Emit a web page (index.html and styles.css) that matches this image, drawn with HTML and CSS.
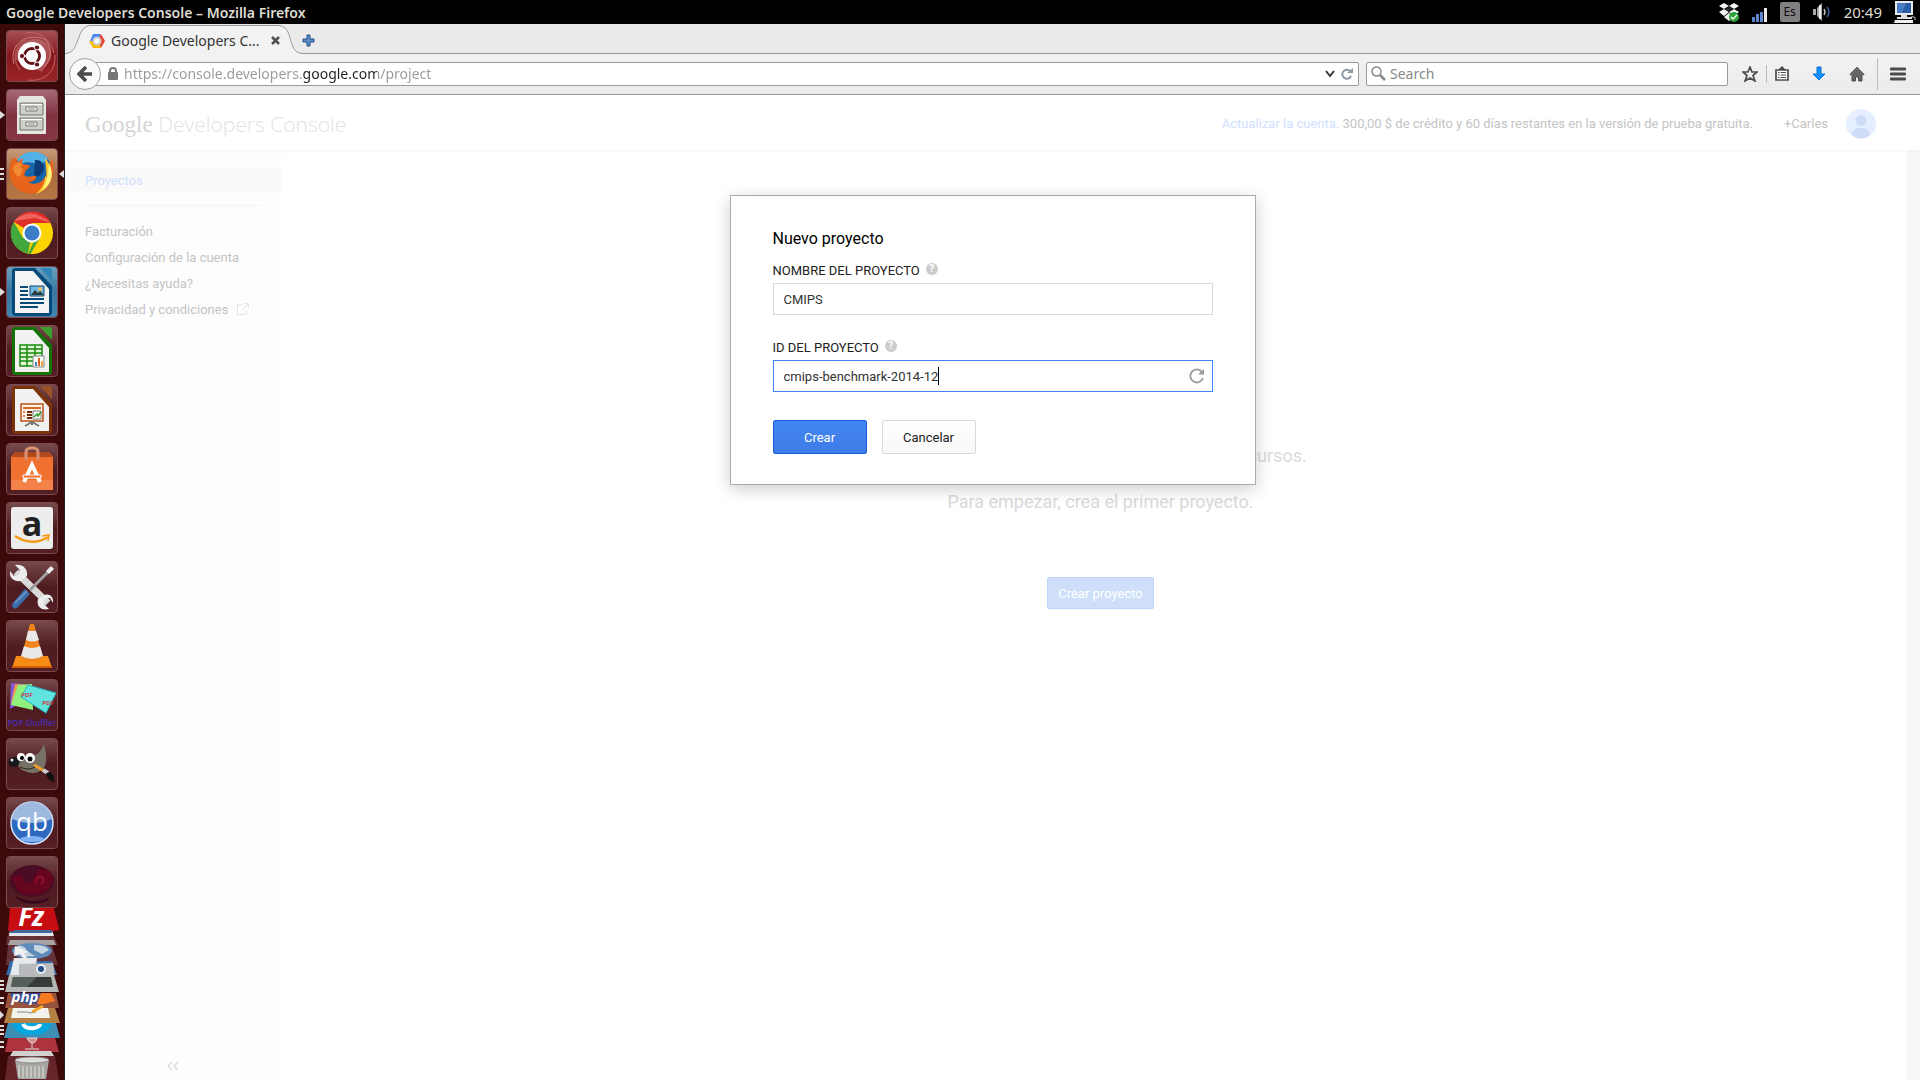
FILE: index.html
```html
<!DOCTYPE html>
<html lang="es">
<head>
  <meta charset="UTF-8">
  <meta name="viewport" content="width=device-width, initial-scale=1.0">
  <title>Google Developers Console</title>
  <link rel="stylesheet" href="styles.css">
</head>
<body>
  <header class="panel">
    <span class="panel-title">Google Developers Console – Mozilla Firefox</span>
    <div class="tray">
      <svg class="tray-dropbox" width="22" height="20" viewBox="0 0 22 20">
        <path d="M6 1l5 3-5 3-5-3zM16 1l5 3-5 3-5-3zM6 7l5 3-5 4-5-4zM16 7l5 3-5 4-5-4zM6 15l5-4 5 4-5 4z" fill="#f4f4f4"/>
        <path d="M11 4l5 3-5 3-5-3z" fill="#222"/>
        <circle cx="16" cy="15" r="5" fill="#2da336"/>
        <path d="M13 15l2 2 4-4" fill="none" stroke="#fff" stroke-width="1.5"/>
      </svg>
      <svg class="tray-signal" width="16" height="20" viewBox="0 0 16 20">
        <path d="M0 15h3v5H0zM4 12h3v8H4zM8 10h3v10H8z" fill="#5b86cf"/>
        <path d="M12 6h3v14h-3z" fill="#e8e8e8"/>
      </svg>
      <span class="keyboard">Es</span>
      <svg class="tray-sound" width="20" height="20" viewBox="0 0 20 20">
        <path d="M1 7h3v6H1zM5 6l5-5v18l-5-5z" fill="#aaa"/>
        <path d="M8 3v14" stroke="#eee" stroke-width="2"/>
        <path d="M12 7q2 3 0 6" fill="none" stroke="#bbb" stroke-width="1.5"/>
        <path d="M15 5q4 5 0 10" fill="none" stroke="#3b5f99" stroke-width="1.5"/>
      </svg>
      <time class="clock">20:49</time>
      <svg width="22" height="22" viewBox="0 0 22 22">
        <path d="M1 0h18v14H1z" fill="#e9e9e4"/>
        <path d="M3 2h14v10H3z" fill="#2a5ca8"/>
        <path d="M3 2h9L8 12H3z" fill="#4a7cc6"/>
        <path d="M7 14h6v2h5v2H3v-2h4z" fill="#ddd"/>
        <path d="M1 19h18v3H0z" fill="#eee"/>
        <path d="M17 16q5-1 4 3" fill="none" stroke="#ddd"/>
      </svg>
    </div>
  </header>

  <div class="desktop">
    <nav class="launcher" aria-label="Launcher">
      <button class="tile ubuntu" aria-label="Dash">
        <svg viewBox="0 0 52 52">
          <path d="M8 34C2 12 24 2 40 10c6 8 6 20-2 27" fill="none" stroke="#cf8080" stroke-width="1"/>
          <path d="M14 40C6 30 8 16 20 10M22 50c14 2 28-6 27-25M20 3c12-2 24 4 28 20" fill="none" stroke="#bf6868" stroke-width="1"/>
          <path d="M10 30C8 16 22 6 36 10q10 4 9 18L36 42z" fill="#d28a8a" opacity=".45"/>
          <circle cx="26" cy="26" r="14" fill="#fff"/>
          <circle cx="26" cy="26" r="7.500" fill="none" stroke="#5e1218" stroke-width="3"/>
          <path d="M26 26L14 26M26 26l6-11M26 26l6 11" stroke="#fff" stroke-width="1.500"/>
          <circle cx="26" cy="26" r="6" fill="#fff"/>
          <g fill="#5e1218" stroke="#fff"><circle cx="16" cy="26" r="2.600"/><circle cx="31" cy="17.500" r="2.600"/><circle cx="31" cy="34.500" r="2.600"/></g>
        </svg>
      </button>
      <button class="tile files arrow-left" aria-label="Files">
        <svg viewBox="0 0 52 52">
          <path d="M14 7h23l3 4v34H11V11z" fill="#e6e6e1"/>
          <path d="M14 14h23v12H14zM14 29h23v12H14z" fill="#cfcfca" stroke="#6e6e68"/>
          <path d="M15 15h21v1H15zM15 30h21v1H15z" fill="#fff"/>
          <path d="M20 18h11v4H20zM20 33h11v4H20z" fill="#f2f2ee" stroke="#777"/>
          <path d="M22 20h7M22 35h7" stroke="#888"/>
        </svg>
      </button>
      <button class="tile firefox bars-left active" aria-label="Firefox">
        <svg viewBox="0 0 52 52">
          <circle cx="27" cy="23" r="19" fill="#1766a8"/>
          <path d="M12 11a19 19 0 0 1 30 0q-8 8-14 4c-8-2-12 0-16 2z" fill="#52b2e6"/>
          <path d="M29 12c7-1 11 6 8 12-3 5-9 5-9 5z" fill="#0b3b78"/>
          <path d="M8 9l4 5 5-4-1 6 7 1c2 1 0 3-3 5l-2 5c5 4 8 0 12 1 1 4-4 6-8 6 8 5 18-1 19-11l5-12c3 12 1 25-9 31-16 10-36-2-33-22 0-4 1-8 4-11z" fill="#e8641b"/>
          <path d="M39 10c11 12 8 31-9 36 8-8 9-12 9-18l2 2z" fill="#fcc62c"/>
          <path d="M43 15c6 12 2 22-7 27 5-8 6-17 7-27z" fill="#fff27a"/>
          <path d="M7 20c1-5 5-6 10-4l-3 3 3 2-3 8c-4-1-6-4-7-9z" fill="#f38a31"/>
        </svg>
      </button>
      <button class="tile" aria-label="Chrome">
        <svg viewBox="0 0 52 52">
          <circle cx="26" cy="26" r="21" fill="#fed400"/>
          <path d="M26 26L8 15a21 21 0 0 1 37 1H26z" fill="#df2e27"/>
          <path d="M26 26l-4 20.600A21 21 0 0 1 7.800 15L17 31z" fill="#43a73d"/>
          <path d="M35 29L24.500 47A12 12 0 0 1 22 47L28 34z" fill="#43a73d"/>
          <path d="M8 14q16-16 37 2l-16-5z" fill="#f0625b"/>
          <circle cx="26" cy="26" r="9.500" fill="#fff"/><circle cx="26" cy="26" r="7.500" fill="#3b7dc8"/>
        </svg>
      </button>
      <button class="tile writer arrow-left" aria-label="LibreOffice Writer">
        <svg viewBox="0 0 52 52">
          <path d="M8 2h21l17 18v26q0 4-4 4H10q-4 0-4-4V4z" fill="#054a78"/>
          <path d="M9 5h18l16 18v24H9z" fill="#f4f4f4"/>
          <path d="M34 2h10q2 0 2 2v11z" fill="#2f85b5"/>
          <path d="M14 20h8v2h-8zM14 24h8v2h-8zM14 28h8v2h-8zM14 32h24v2H14zM14 36h24v2H14zM14 40h18v2H14z" fill="#084b78"/>
          <path d="M24 20h14v10H24z" fill="#72b7df" stroke="#084b78"/>
          <path d="M25 29l4-5 3 3 2-2 4 4z" fill="#2e3a35"/><circle cx="34" cy="23" r="2" fill="#f5b95b"/>
        </svg>
      </button>
      <button class="tile" aria-label="LibreOffice Calc">
        <svg viewBox="0 0 52 52">
          <path d="M8 2h21l17 18v26q0 4-4 4H10q-4 0-4-4V4z" fill="#147306"/>
          <path d="M9 5h18l16 18v24H9z" fill="#f1f1f1"/>
          <path d="M34 2h10q2 0 2 2v11z" fill="#3c9e2c"/>
          <path d="M14 20h22v21H14z" fill="#dff7d5" stroke="#198a0c" stroke-width="1.500"/>
          <path d="M14 24h22M14 28h22M14 32h22M14 36h22M21 20v21M29 20v21" stroke="#198a0c" stroke-width="1.500"/>
          <path d="M27 31h11v11H27z" fill="#fff" stroke="#888"/>
          <path d="M29 37h2v4h-2z" fill="#3a84c4"/><path d="M32 33h2v8h-2z" fill="#e2611c"/><path d="M35 36h2v5h-2z" fill="#f2a23a"/>
        </svg>
      </button>
      <button class="tile" aria-label="LibreOffice Impress">
        <svg viewBox="0 0 52 52">
          <path d="M8 2h21l17 18v26q0 4-4 4H10q-4 0-4-4V4z" fill="#7b3408"/>
          <path d="M9 5h18l16 18v24H9z" fill="#f1f1f1"/>
          <path d="M34 2h10q2 0 2 2v11z" fill="#9b5228"/>
          <path d="M15 20h22v17H15z" fill="#fff4eb" stroke="#b5521b" stroke-width="1.500"/>
          <path d="M17 23h18v2H17z" fill="#d9651f"/>
          <path d="M17 27h2v2h-2zM17 31h2v2h-2z" fill="#e58c50"/><path d="M21 27h5v2h-5zM21 30h5v2h-5zM21 33h5v2h-5z" fill="#6b2b08"/>
          <path d="M27 27h8v8h-8z" fill="#fff" stroke="#777"/><path d="M28 33l3-3 1 2 3-4" fill="none" stroke="#2e9a2b" stroke-width="1.500"/>
          <path d="M19 42l7-4 7 4M26 37v4" fill="none" stroke="#777" stroke-width="2"/>
        </svg>
      </button>
      <button class="tile" aria-label="Ubuntu Software Center">
        <svg viewBox="0 0 52 52">
          <path d="M5 14l4-5h34l4 5v33H5z" fill="#f0712f"/>
          <path d="M5 14l4-5h34l4 5z" fill="#b04a1c"/><path d="M5 37h42v10H5z" fill="#f58349"/>
          <path d="M20 17v-8q0-4 6-4t6 4v8" fill="none" stroke="#d99073" stroke-width="3"/>
          <path d="M18 39l8-17 8 17" fill="none" stroke="#fff" stroke-width="4"/>
          <path d="M17 32h18v3H17z" fill="#f0712f" stroke="#fff"/>
        </svg>
      </button>
      <button class="tile" aria-label="Amazon">
        <svg viewBox="0 0 52 52">
          <rect x="5" y="5" width="42" height="42" rx="3" fill="#ededed"/>
          <text x="26" y="34" class="glyph amazon-a">a</text>
          <path d="M9 34q17 11 33 1" fill="none" stroke="#f59a14" stroke-width="2.500"/><path d="M36 34l7-1-1 6" fill="none" stroke="#f59a14" stroke-width="1.500"/>
        </svg>
      </button>
      <button class="tile" aria-label="System Settings">
        <svg viewBox="0 0 52 52">
          <path d="M10 11l32 31" stroke="#d9d9d9" stroke-width="7"/>
          <path d="M9 4l5 5-1 5-5 1-4-5c-1 7 4 11 11 10l6-5c1-7-4-12-12-11zM43 48l-5-5 1-5 5-1 3 5c1-7-4-10-9-8l-6 4c-2 7 3 12 11 10z" fill="#ececec"/>
          <path d="M46 7L24 29" stroke="#9d9d9d" stroke-width="3"/><path d="M45 5l3 3-5 5-3-3z" fill="#eee"/>
          <path d="M6 43l13-15 5 5-13 14q-5 2-5-4z" fill="#3c6cab"/><path d="M9 42l12-12" stroke="#759bcb" stroke-width="1.500"/>
        </svg>
      </button>
      <button class="tile" aria-label="VLC">
        <svg viewBox="0 0 52 52">
          <path d="M10 36h32l4 12H6z" fill="#f68b16"/><path d="M6 46h40v2H6z" fill="#d35d05"/>
          <path d="M24 4h4l9 34q-11 6-22 0z" fill="#f1841c"/>
          <path d="M22 11h8l3 9q-7 3-13 0zM18 26q8 4 16 0l3 10q-11 6-22 0z" fill="#e8e8e8"/>
        </svg>
      </button>
      <button class="tile" aria-label="PDF-Shuffler">
        <svg viewBox="0 0 52 52">
          <path d="M5 4l14 1-6 20-9 5z" fill="#8257d8"/><path d="M9 5l14 1-9 22-9-4z" fill="#ef9f4e"/>
          <path d="M12 6l14-1 1 26-22-5z" fill="#8ff07e"/><path d="M22 6l28 8-10 20-25-16z" fill="#61e4de" stroke="#20b9c5"/>
          <text x="21" y="18" class="glyph pdf-mark">PDF</text><text x="42" y="26" class="glyph pdf-mark">PDF</text>
          <text x="26" y="47" class="glyph pdf-name">PDF-Shuffler</text>
        </svg>
      </button>
      <button class="tile" aria-label="GIMP">
        <svg viewBox="0 0 52 52">
          <path d="M12 21q8 0 12-2 10-2 14-13 5 18-1 25-8 7-19 2-5-2-7-8z" fill="#777267"/>
          <ellipse cx="8" cy="24" rx="5.500" ry="5" fill="#16191c"/><circle cx="6" cy="22" r="1.500" fill="#eee"/>
          <circle cx="15" cy="19" r="4" fill="#fff"/><circle cx="24" cy="20" r="5" fill="#fff"/><circle cx="16" cy="20" r="2"/><circle cx="24" cy="21" r="2.500"/>
          <path d="M28 27l12 7" stroke="#ef9c2c" stroke-width="3"/><path d="M37 32l5 3" stroke="#ccc" stroke-width="4"/><path d="M40 35q9-3 8 9-7-1-8-9z" fill="#111"/>
          <path d="M14 29q8 4 15 0" fill="none" stroke="#292621"/>
        </svg>
      </button>
      <button class="tile" aria-label="qBittorrent">
        <svg viewBox="0 0 52 52">
          <circle cx="26" cy="26" r="21" fill="#2e69c0" stroke="#d6e4f7" stroke-width="1.500"/>
          <path d="M6 22q2-15 20-17 18 2 20 17-20 8-40 0z" fill="#9db9de"/><ellipse cx="26" cy="42" rx="12" ry="3" fill="#80b2f3"/>
          <text x="26" y="34" class="glyph qb">qb</text>
        </svg>
      </button>
      <button class="tile" aria-label="Debian tools">
        <svg viewBox="0 0 52 52">
          <ellipse cx="26" cy="25" rx="22" ry="16" fill="#4a0b24"/>
          <path d="M6 20q6 19 13 18h14q13-4 14-17-4-11-15-7l-7 13q-9 0-9-8z" fill="#66061e"/>
          <path d="M30 27q0-7 6-6 4 4-1 7" fill="none" stroke="#8d1028" stroke-width="2"/>
          <path d="M10 41q16 9 33 1-2 5-14 5-12 1-19-6z" fill="#490a25" stroke="#300619"/>
        </svg>
      </button>
      <!-- launcher items folded together at the bottom edge -->
      <svg class="folded" viewBox="0 0 64 180" role="img" aria-label="More applications">
        <path d="M8 33h44l6 12H6zM8 45h44l6 20H6z" fill="#74434a" opacity=".7"/>
        <path d="M10 30h42l2 6H9z" fill="#e5e8e9"/><path d="M10 30h42v3H10z" fill="#3e6a9f"/>
        <path d="M10 40h44l2 5H8z" fill="#a9a2a3"/>
        <path d="M10 5l2 1 2-1 2 1 2-1h35l6 24-2 2-2-1-2 2-2-2H14l-2 2-2-2-2 1z" fill="#c70d12"/>
        <text x="31" y="26" class="glyph fz">Fz</text>
        <ellipse cx="32" cy="51" rx="20" ry="8" fill="#5f8ab9"/><path d="M17 46q8-1 10 5l8 5-14 1zM34 45q12 0 15 5l-7 4-8-4z" fill="#c5d6df"/>
        <path d="M15 46l14 6-5 1 3 5-3 1-3-5-7 2z" fill="#f1f1f1"/>
        <path d="M10 61h42l5 14H6z" fill="#356ba8"/><path d="M14 58h23l-2 17H10z" fill="#e7eaec"/>
        <path d="M19 64l34-1 2 12H19z" fill="#b8babd"/><circle cx="41" cy="69" r="4" fill="#28518b" stroke="#e5edf5" stroke-width="2"/>
        <path d="M9 75h45l5 17H5z" fill="#b6b8b5"/><path d="M13 77h38l2 10H11z" fill="#343b39"/><path d="M13 77h24l-10 10H11z" fill="#56605b"/>
        <path d="M8 93h48l3 15H5z" fill="#96533d"/><path d="M10 93h42q-1 11-21 11-18-1-21-11z" fill="#344d93"/><path d="M41 93h10l4 8-11 3h-7z" fill="#f57a22"/><text x="25" y="102" class="glyph php">php</text>
        <path d="M8 108h47l5 15H4z" fill="#b38045"/><path d="M13 108h35l2 10H11z" fill="#f3f3ed"/><path d="M17 112h10l3 1 6-1" fill="none" stroke="#888"/><path d="M32 112l11-6" stroke="#efa62a" stroke-width="3"/>
        <path d="M8 123h48l4 15H4z" fill="#3c8eb4"/><path d="M12 123h40q-3 12-20 12-18 0-20-12z" fill="#08a6df"/><path d="M23 124q2 5 11 4 6-1 6-4" fill="none" stroke="#fff" stroke-width="4"/>
        <path d="M8 138h47l4 14H5z" fill="#ad343f"/><path d="M27 138h10q-1 5-5 5-3 0-5-5zM32 143v5M25 149h14" fill="#d88b8b" stroke="#ddd"/>
        <path d="M13 151h38l3 5H10z" fill="#d3d1d0"/><path d="M8 156h47l4 24H5z" fill="#65252b"/>
        <path d="M15 160h34l-3 19H18z" fill="#a5a5a2"/><ellipse cx="32" cy="160" rx="17" ry="3" fill="#ddd" stroke="#8c8c88"/>
        <path d="M19 165v12M23 166v12M27 166v12M31 166v12M35 166v12M39 166v12M43 166v12" stroke="#e4e4df"/>
        <path d="M0 80h4v2H0zM0 84h4v2H0zM0 88h4v2H0zM0 97h4v2H0zM0 102h4v2H0zM0 111l4 4-4 4zM0 125h4v2H0zM0 129h4v2H0zM0 133h4v2H0zM0 141h4v2H0zM0 146h4v2H0z" fill="#ddd"/>
      </svg>
    </nav>

    <div class="browser">
      <div class="tabstrip">
        <div class="tab">
          <svg class="tab-shape" width="242" height="30" viewBox="0 0 242 30">
            <path d="M0 29.500C16 29.500 10 1.500 26 1.500H213C230 1.500 221 29.500 238 29.500V30H0z" fill="#f2f2f2"/>
            <path d="M0 29.500C16 29.500 10 1.500 26 1.500H213C230 1.500 221 29.500 238 29.500" fill="none" stroke="#999"/>
          </svg>
          <svg class="favicon" width="16" height="16" viewBox="0 0 16 16">
            <path d="M4 1h8L8 8 1 8z" fill="#4285f4"/><path d="M12 1l4 7-4 7-4-7z" fill="#e94335"/><path d="M0 8h8l4 7H4z" fill="#fbbc05"/>
            <circle cx="8" cy="8" r="4.500" fill="#ccc"/><circle cx="8" cy="8" r="2.500" fill="#fff"/>
          </svg>
          <span class="tab-title">Google Developers C...</span>
          <button class="plain" aria-label="Cerrar pestaña"><svg width="9" height="9" viewBox="0 0 9 9"><path d="M1 1l7 7M8 1L1 8" stroke="#4a4f52" stroke-width="2.500"/></svg></button>
        </div>
        <button class="plain new-tab" aria-label="Nueva pestaña"><svg width="13" height="13" viewBox="0 0 13 13"><path d="M5 1h3v4h4v3H8v4H5V8H1V5h4z" fill="#5d8dc9" stroke="#244d84"/></svg></button>
      </div>

      <div class="toolbar">
        <button class="back" aria-label="Atrás">
          <svg width="16" height="16" viewBox="0 0 16 16"><path d="M9 1L2 8l7 7M3 8h12" fill="none" stroke="#4c4c4c" stroke-width="3.500"/></svg>
        </button>
        <div class="urlbar">
          <svg width="10" height="13" viewBox="0 0 10 13"><path d="M2 6V4q0-3 3-3t3 3v2" fill="none" stroke="#777" stroke-width="2"/><rect y="5" width="10" height="8" rx="1" fill="#777"/></svg>
          <input class="url" type="text" aria-label="Dirección" value="https://console.developers.google.com/project">
          <svg width="10" height="8" viewBox="0 0 10 8"><path d="M1 1l4 5 4-5" fill="none" stroke="#333" stroke-width="2"/></svg>
          <button class="plain" aria-label="Recargar"><svg width="12" height="12" viewBox="0 0 12 12"><path d="M10 8a4.500 4.500 0 1 1-1-5" fill="none" stroke="#8d98a5" stroke-width="2"/><path d="M6 5h6V0z" fill="#8d98a5"/></svg></button>
        </div>
        <div class="searchbar">
          <svg width="15" height="15" viewBox="0 0 15 15"><circle cx="5.500" cy="5.500" r="4.500" fill="none" stroke="#888" stroke-width="1.500"/><path d="M9 9l5 5" stroke="#888" stroke-width="2.500"/></svg>
          <input type="text" aria-label="Search" placeholder="Search">
        </div>
        <div class="tools">
          <button class="plain" aria-label="Marcador"><svg width="16" height="16" viewBox="0 0 16 16"><path d="M8 1l2 5h5l-4 3.500 2 5.500-5-3-5 3 2-5.500L1 6h5z" fill="none" stroke="#4c4c4c" stroke-width="1.700"/></svg></button>
          <i class="divider"></i>
          <button class="plain" aria-label="Lista de marcadores"><svg width="14" height="16" viewBox="0 0 14 16"><path d="M1 4h12v10H1z" fill="#fff" stroke="#4c4c4c" stroke-width="1.700"/><path d="M3 4l4-4 4 4z" fill="#4c4c4c"/><path d="M3 6.500h1.500M3 9h1.500M3 11.500h1.500M5.500 6.500H11M5.500 9H11M5.500 11.500H11" stroke="#4c4c4c"/></svg></button>
          <button class="plain" aria-label="Descargas"><svg width="14" height="16" viewBox="0 0 14 16"><path d="M5 1h4v7h4l-6 6-6-6h4z" fill="#158fff" stroke="#0b76d6"/></svg></button>
          <button class="plain" aria-label="Inicio"><svg width="16" height="16" viewBox="0 0 16 16"><path d="M1 9l7-7 7 7" fill="none" stroke="#4c4c4c" stroke-width="1.700"/><path d="M3 9l5-5 5 5v6H9.500v-4h-3v4H3z" fill="#666" stroke="#4c4c4c"/></svg></button>
          <i class="divider tall"></i>
          <button class="plain" aria-label="Menú"><svg width="16" height="14" viewBox="0 0 16 14"><path d="M1 2h14M1 7h14M1 12h14" stroke="#4c4c4c" stroke-width="2.800" stroke-linecap="round"/></svg></button>
        </div>
      </div>

      <div class="page">
        <div class="page-header">
          <div class="logo"><b>Google</b> <span>Developers Console</span></div>
          <p class="trial"><a href="#">Actualizar la cuenta.</a> 300,00 $ de crédito y 60 días restantes en la versión de prueba gratuita.</p>
          <a class="user" href="#">+Carles</a>
          <svg class="avatar" width="30" height="30" viewBox="0 0 30 30"><circle cx="15" cy="15" r="15" fill="#e6efff"/><circle cx="15" cy="11.500" r="5.500" fill="#cfdcf7"/><path d="M6 26q-1-7 9-7t9 7q-9 7-18 0z" fill="#cfdcf7"/></svg>
        </div>

        <div class="page-body">
          <nav class="sidebar">
            <a class="current" href="#">Proyectos</a>
            <hr>
            <a href="#">Facturación</a>
            <a href="#">Configuración de la cuenta</a>
            <a href="#">¿Necesitas ayuda?</a>
            <a href="#">Privacidad y condiciones
              <svg width="12" height="12" viewBox="0 0 12 12"><path d="M5 1.500H.5v10h9V7M7 .5h4.500V5M11 1L5 7" fill="none" stroke="#e4e4e4"/></svg>
            </a>
            <button class="plain collapse" aria-label="Contraer"><svg width="12" height="10" viewBox="0 0 12 10"><path d="M5 1L1 5l4 4M11 1L7 5l4 4" fill="none" stroke="#ddd" stroke-width="1.500"/></svg></button>
          </nav>
          <main class="empty">
            <p>Los proyectos te permiten administrar tus recursos.</p>
            <p>Para empezar, crea el primer proyecto.</p>
            <button class="create">Crear proyecto</button>
          </main>
          <div class="scrollbar"></div>
        </div>

        <div class="overlay">
          <form class="dialog" role="dialog" aria-labelledby="dialogTitle">
            <h2 id="dialogTitle">Nuevo proyecto</h2>
            <div class="form-group">
              <div class="label-row">
                <label for="projectName">NOMBRE DEL PROYECTO</label>
                <span class="help">?</span>
              </div>
              <input type="text" id="projectName" value="CMIPS">
            </div>
            <div class="form-group">
              <div class="label-row">
                <label for="projectId">ID DEL PROYECTO</label>
                <span class="help">?</span>
              </div>
              <div class="id-field">
                <input class="focused" type="text" id="projectId" value="cmips-benchmark-2014-12">
                <span class="caret"></span>
                <button type="button" class="plain refresh" aria-label="Generar otro ID"><svg width="16" height="16" viewBox="0 0 16 16"><path d="M14 10a6.500 6.500 0 1 1-1-6" fill="none" stroke="#999" stroke-width="1.800"/><path d="M9 6.500h6V1z" fill="#999"/></svg></button>
              </div>
            </div>
            <div class="actions">
              <button type="button" class="primary">Crear</button>
              <button type="button">Cancelar</button>
            </div>
          </form>
        </div>
      </div>
    </div>
  </div>
</body>
</html>
```

FILE: styles.css
```css
* {
  box-sizing: border-box;
}

body {
  display: flex;
  flex-direction: column;
  height: 100vh;
  margin: 0;
  overflow: hidden;
  font-family: Roboto, sans-serif;
  font-size: 13px;
  color: #333;
}

svg {
  display: block;
  flex: none;
}

a {
  color: inherit;
  text-decoration: none;
}

input,
button {
  font: inherit;
  color: inherit;
}

.plain {
  padding: 0;
  border: 0;
  background: none;
}

/* top panel */
.panel {
  display: flex;
  align-items: center;
  justify-content: space-between;
  flex: none;
  height: 24px;
  padding: 0 4px 0 6px;
  background: #000;
  color: #dfdbd2;
  font-family: "Noto Sans", sans-serif;
  font-size: 14px;
}

.panel-title {
  font-weight: 600;
}

.tray {
  display: flex;
  align-items: center;
  gap: 12px;
}

.keyboard {
  width: 20px;
  height: 20px;
  border-radius: 2px;
  background: #808080;
  color: #111;
  font-size: 12px;
  line-height: 20px;
  text-align: center;
}

.clock {
  font-size: 15px;
}

/* launcher */
.desktop {
  display: flex;
  flex: 1;
  min-height: 0;
}

.launcher {
  display: flex;
  flex-direction: column;
  gap: 7px;
  flex: none;
  width: 65px;
  padding: 6px 0 0 6px;
  overflow: hidden;
  border-right: 1px solid #222;
  background: #3d0a0c;
}

.tile {
  position: relative;
  flex: none;
  width: 52px;
  height: 52px;
  padding: 0;
  border: 1px solid #7c4a4e;
  border-radius: 4px;
  background: linear-gradient(#76494b, #4d1b20 50%, #541f25);
}

.tile svg {
  width: 52px;
  height: 52px;
  margin: -1px;
  overflow: visible;
}

.ubuntu {
  background: linear-gradient(#a65054, #86171c 50%, #9a2528);
}

.files {
  background: linear-gradient(#a66a77, #7f3240 50%, #8a3744);
}

.firefox {
  background: linear-gradient(#c79b7a, #a96a40 50%, #b77744);
}

.writer {
  background: linear-gradient(#6aa0c0, #3577a0 50%, #4286af);
}

.arrow-left::before,
.active::after {
  content: "";
  position: absolute;
  top: 21px;
  border: 4px solid transparent;
}

.arrow-left::before {
  left: -7px;
  border-left: 5px solid #ddd;
}

.active::after {
  right: -7px;
  border-right: 5px solid #ddd;
}

.bars-left::before {
  content: "";
  position: absolute;
  top: 19px;
  left: -7px;
  width: 4px;
  height: 12px;
  background: repeating-linear-gradient(#ddd 0 2px, transparent 2px 5px);
}

.folded {
  width: 64px;
  height: 180px;
  margin: -15px 0 0 -6px;
}

.glyph {
  font-family: "Open Sans", sans-serif;
  font-weight: 700;
  text-anchor: middle;
}

.amazon-a {
  font-size: 34px;
  fill: #222;
}

.pdf-mark {
  font-size: 6px;
  fill: #d23a4a;
}

.pdf-name {
  font-size: 8px;
  font-weight: 600;
  fill: #4a2cb0;
}

.qb {
  font-size: 26px;
  font-weight: 400;
  fill: #fff;
}

.fz {
  font-size: 26px;
  font-style: italic;
  fill: #fff;
}

.php {
  font-size: 15px;
  font-style: italic;
  fill: #fff;
}

/* browser chrome */
.browser {
  display: flex;
  flex-direction: column;
  flex: 1;
  min-width: 0;
  font-family: "Noto Sans", sans-serif;
  font-size: 14px;
}

.tabstrip {
  display: flex;
  flex: none;
  height: 30px;
  border-bottom: 1px solid #999;
  background: #ebebeb;
}

.tab {
  position: relative;
  display: flex;
  align-items: center;
  gap: 6px;
  width: 237px;
  padding: 4px 22px 0 24px;
}

.tab-shape {
  position: absolute;
  top: 0;
  left: 0;
}

.favicon,
.tab-title,
.tab button {
  position: relative;
}

.tab-title {
  flex: 1;
  white-space: nowrap;
}

.new-tab {
  padding-top: 3px;
}

.toolbar {
  display: flex;
  align-items: center;
  flex: none;
  height: 41px;
  padding: 0 14px 1px 4px;
  border-bottom: 1px solid #999;
  background: linear-gradient(#f2f2f2, #ebebeb);
}

.back {
  z-index: 1;
  display: flex;
  align-items: center;
  justify-content: center;
  flex: none;
  width: 32px;
  height: 32px;
  padding: 0;
  border: 1px solid #9aa3ae;
  border-radius: 50%;
  background: #fafafa;
}

.urlbar,
.searchbar {
  display: flex;
  align-items: center;
  height: 24px;
  border: 1px solid #999;
  border-radius: 2px;
  background: #fff;
}

.urlbar {
  flex: 1;
  gap: 6px;
  margin-left: -6px;
  padding: 0 5px 0 12px;
}

.urlbar input,
.searchbar input {
  flex: 1;
  min-width: 0;
  padding: 0;
  border: 0;
  outline: 0;
  background: none;
}

/* only the domain is dark, the rest of the address is greyed */
.urlbar .url {
  background: linear-gradient(to right, #999 178px, #222 178px, #222 253px, #999 253px);
  background-clip: text;
  -webkit-background-clip: text;
  color: transparent;
}

.searchbar {
  gap: 4px;
  width: 362px;
  margin-left: 7px;
  padding: 0 4px;
}

.searchbar input::placeholder {
  color: #888;
}

.tools {
  display: flex;
  align-items: center;
  gap: 8px;
  margin-left: 14px;
}

.tools .plain + .plain {
  margin-left: 15px;
}

.divider {
  width: 1px;
  height: 18px;
  background: #bbb;
}

.tall {
  height: 32px;
  margin: 0 4px;
}

/* console page */
.page {
  position: relative;
  display: flex;
  flex-direction: column;
  flex: 1;
  min-height: 0;
  font-family: Roboto, sans-serif;
  font-size: 13px;
  background: #fff;
  color: #c4c4c4;
}

.page-header {
  z-index: 1;
  display: flex;
  align-items: center;
  flex: none;
  height: 55px;
  padding: 2px 44px 0 20px;
  box-shadow: 0 1px 4px rgba(0, 0, 0, 0.04);
}

.logo {
  flex: 1;
  font-family: "Open Sans", sans-serif;
  font-size: 21px;
  font-weight: 300;
  color: #e2e2e2;
}

.logo b {
  font-family: "Liberation Serif", serif;
  font-size: 23px;
  font-weight: 400;
  color: #d4d4d4;
}

.trial a,
.sidebar .current {
  color: #cfe0fd;
}

.user {
  margin: 0 18px 0 31px;
}

.page-body {
  position: relative;
  display: flex;
  flex: 1;
  min-height: 0;
}

.sidebar {
  display: flex;
  flex-direction: column;
  width: 216px;
  padding: 17px 0 9px;
  background: #fdfdfd;
}

.sidebar a {
  display: flex;
  align-items: center;
  gap: 9px;
  height: 26px;
  padding: 0 20px;
}

.sidebar .current {
  background: #fafafa;
}

.sidebar hr {
  width: 176px;
  margin: 12px 20px;
  border: 0;
  border-top: 1px solid #f4f4f4;
}

.collapse {
  align-self: center;
  margin-top: auto;
}

.empty {
  flex: 1;
  padding-top: 294px;
  text-align: center;
  font-size: 18px;
  color: #dadada;
}

.empty p {
  margin: 0 0 22px;
  line-height: 24px;
}

.create {
  height: 32px;
  margin-top: 41px;
  padding: 0 10px;
  border: 1px solid #bfd3f8;
  border-radius: 2px;
  background: #cfdffa;
  color: #fff;
  font-size: 13px;
}

.scrollbar {
  position: absolute;
  top: 0;
  right: 0;
  bottom: 0;
  width: 13px;
  background: #f7f7f7;
}

/* new project dialog */
.overlay {
  position: absolute;
  inset: 0;
  z-index: 2;
  display: flex;
  align-items: flex-start;
  justify-content: center;
  padding-top: 100px;
}

.dialog {
  width: 526px;
  padding: 33px 42px 30px;
  border: 1px solid #aaa;
  background: #fff;
  box-shadow: 0 4px 16px rgba(0, 0, 0, 0.2);
  color: #222;
}

.dialog h2 {
  margin: 0 0 10px;
  font-size: 16px;
  font-weight: 400;
  line-height: 20px;
  color: #000;
}

.form-group {
  margin-bottom: 21px;
}

.label-row {
  display: flex;
  gap: 6px;
  height: 24px;
  line-height: 24px;
}

.help {
  width: 12px;
  height: 12px;
  margin-top: 4px;
  border-radius: 50%;
  background: #ccc;
  color: #fff;
  font-size: 10px;
  font-weight: 700;
  line-height: 12px;
  text-align: center;
}

.form-group input {
  display: block;
  width: 100%;
  height: 32px;
  padding: 0 10px;
  border: 1px solid #d9d9d9;
  outline: 0;
  color: #333;
}

.form-group .focused {
  border-color: #4285f4;
}

.id-field {
  position: relative;
}

.caret {
  position: absolute;
  top: 7px;
  left: 165px;
  width: 1px;
  height: 18px;
  background: #000;
}

.refresh {
  position: absolute;
  top: 8px;
  right: 8px;
}

.actions {
  display: flex;
  gap: 15px;
  padding-top: 7px;
}

.actions button {
  width: 94px;
  height: 34px;
  border: 1px solid #d9d9d9;
  border-radius: 2px;
  background: linear-gradient(#fff, #f8f8f8);
}

.actions .primary {
  border-color: #1a5fdc;
  background: linear-gradient(#4285f4, #3f7de6);
  color: #fff;
}
```
